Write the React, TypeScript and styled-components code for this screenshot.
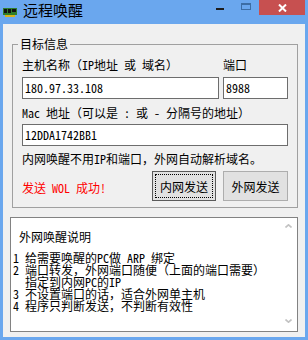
import React from 'react';
import styled, { createGlobalStyle } from 'styled-components';

const Global = createGlobalStyle`
  html, body { margin: 0; padding: 0; background: #6aa7ee; }
  body { font-family: "Noto Sans Mono CJK SC", "Noto Sans CJK SC", sans-serif; }
  * { box-sizing: border-box; }
`;

const Window = styled.div`
  width: 308px;
  height: 340px;
  background: #6aa7ee;
  display: flex;
  flex-direction: column;
  overflow: hidden;
`;

const TitleBar = styled.div`
  height: 24px;
  flex-shrink: 0;
  display: flex;
  align-items: flex-start;
`;

const AppIcon = styled.svg`
  margin: 8px 0 0 3px;
  flex-shrink: 0;
`;

const Title = styled.div`
  font-family: "Noto Sans CJK SC", sans-serif;
  font-size: 15px;
  line-height: 20px;
  margin-left: 6px;
  color: #000;
`;

const Captions = styled.div`
  margin-left: auto;
  margin-right: 3px;
  display: flex;
`;

const CaptionButton = styled.div<{ $close?: boolean }>`
  width: ${(p) => (p.$close ? 46 : 26)}px;
  height: 15px;
  display: flex;
  justify-content: center;
  align-items: ${(p) => (p.$close ? 'center' : 'flex-start')};
  padding-top: ${(p) => (p.$close ? 0 : 3)}px;
  background: ${(p) => (p.$close ? '#c75050' : 'transparent')};
`;

const MinDash = styled.div`
  width: 8px;
  height: 2px;
  margin-top: 5px;
  background: #1d1d1d;
`;

const Client = styled.div`
  flex: 1;
  margin: 0 3px 3px;
  background: #f0f0f0;
  display: flex;
  flex-direction: column;
  gap: 9px;
  padding: 13px 7px 5px 9px;
`;

const GroupBox = styled.fieldset`
  margin: 0;
  padding: 0 9px 6px 9px;
  border: 1px solid #a0a0a0;
  min-width: 0;
  display: flex;
  flex-direction: column;
`;

const Legend = styled.legend`
  font-size: 12px;
  line-height: 14px;
  padding: 0 2px;
  margin-left: -4px;
  color: #000;
`;

const Label = styled.div<{ $top: number; $color?: string }>`
  font-size: 12px;
  line-height: 14px;
  height: 14px;
  margin-top: ${(p) => p.$top}px;
  color: ${(p) => p.$color || '#000'};
  white-space: pre;
`;

const HostGrid = styled.div<{ $top: number }>`
  display: grid;
  grid-template-columns: 197px 65px;
  column-gap: 4px;
  margin-top: ${(p) => p.$top}px;
`;

const TextBox = styled.div<{ $top?: number }>`
  height: 22px;
  margin-top: ${(p) => p.$top || 0}px;
  border: 1px solid #6d6d6d;
  background: #fff;
  padding: 0 2px;
  font-size: 12px;
  line-height: 20px;
  color: #000;
  white-space: pre;
`;

const ActionRow = styled.div`
  margin-top: 5px;
  display: flex;
  align-items: center;
`;

const Status = styled.div`
  font-size: 12px;
  line-height: 14px;
  color: #ff0000;
  margin-top: 3px;
  white-space: pre;
`;

const Buttons = styled.div`
  margin-left: auto;
  display: flex;
  gap: 7px;
`;

const Button = styled.button<{ $focused?: boolean }>`
  width: ${(p) => (p.$focused ? 64 : 65)}px;
  height: 30px;
  padding: 0;
  position: relative;
  font-family: inherit;
  font-size: 12px;
  color: #000;
  background: #e1e1e1;
  border: 1px solid ${(p) => (p.$focused ? '#5a5a5a' : '#adadad')};
  outline: ${(p) => (p.$focused ? '1px dotted #000' : 'none')};
  outline-offset: -4px;
`;

const Memo = styled.div`
  margin-left: -2px;
  width: 288px;
  height: 115px;
  border: 1px solid #828282;
  background: #fff;
  display: flex;
`;

const MemoText = styled.div`
  flex: 1;
  padding: 13px 0 0 2px;
  font-size: 12px;
  color: #000;
`;

const MemoHeader = styled.div`
  line-height: 12px;
  margin-bottom: 9px;
  white-space: pre;
`;

const MemoLine = styled.div`
  line-height: 12px;
  white-space: pre;
`;

const ScrollBar = styled.div`
  width: 17px;
  display: flex;
  flex-direction: column;
  justify-content: space-between;
  align-items: center;
  padding: 6px 0 8px;
`;

const memoLines = [
  '1 给需要唤醒的PC做 ARP 绑定',
  '2 端口转发，外网端口随便（上面的端口需要）',
  '  指定到内网PC的IP',
  '3 不设置端口的话，适合外网单主机',
  '4 程序只判断发送，不判断有效性',
];

export default function App() {
  return (
    <Window>
      <Global />
      <TitleBar>
        <AppIcon width="14" height="9" viewBox="0 0 14 9">
          <rect x="0" y="0" width="14" height="7" fill="#2f7d2a" />
          <rect x="1" y="1" width="3" height="4" fill="#111" />
          <rect x="5" y="1" width="3" height="4" fill="#111" />
          <rect x="9" y="1" width="4" height="3" fill="#111" />
          <rect x="2" y="7" width="10" height="2" fill="#d8b318" />
        </AppIcon>
        <Title>远程唤醒</Title>
        <Captions>
          <CaptionButton>
            <MinDash />
          </CaptionButton>
          <CaptionButton>
            <svg width="10" height="7" viewBox="0 0 10 7">
              <rect x="0.5" y="1" width="9" height="5.5" fill="none" stroke="#3d6ea5" strokeWidth="1" />
              <rect x="0" y="0" width="10" height="2" fill="#3d6ea5" />
            </svg>
          </CaptionButton>
          <CaptionButton $close>
            <svg width="9" height="8" viewBox="0 0 9 8">
              <path d="M1 0.5 L8 7.5 M8 0.5 L1 7.5" stroke="#fff" strokeWidth="2" />
            </svg>
          </CaptionButton>
        </Captions>
      </TitleBar>
      <Client>
        <GroupBox>
          <Legend>目标信息</Legend>
          <HostGrid $top={7}>
            <Label $top={0}>主机名称（IP地址 或 域名）</Label>
            <Label $top={0}>端口</Label>
          </HostGrid>
          <HostGrid $top={5}>
            <TextBox>180.97.33.108</TextBox>
            <TextBox>8988</TextBox>
          </HostGrid>
          <Label $top={7}>Mac 地址（可以是 : 或 - 分隔号的地址）</Label>
          <TextBox $top={4}>12DDA1742BB1</TextBox>
          <Label $top={6}>内网唤醒不用IP和端口，外网自动解析域名。</Label>
          <ActionRow>
            <Status>发送 WOL 成功!</Status>
            <Buttons>
              <Button $focused>内网发送</Button>
              <Button>外网发送</Button>
            </Buttons>
          </ActionRow>
        </GroupBox>
        <Memo>
          <MemoText>
            <MemoHeader> 外网唤醒说明</MemoHeader>
            {memoLines.map((l, i) => (
              <MemoLine key={i}>{l}</MemoLine>
            ))}
          </MemoText>
          <ScrollBar>
            <svg width="7" height="4" viewBox="0 0 7 4">
              <path d="M0.5 3.5 L3.5 0.8 L6.5 3.5" fill="none" stroke="#c2c2c2" strokeWidth="1.6" />
            </svg>
            <svg width="7" height="4" viewBox="0 0 7 4">
              <path d="M0.5 0.5 L3.5 3.2 L6.5 0.5" fill="none" stroke="#c2c2c2" strokeWidth="1.6" />
            </svg>
          </ScrollBar>
        </Memo>
      </Client>
    </Window>
  );
}
